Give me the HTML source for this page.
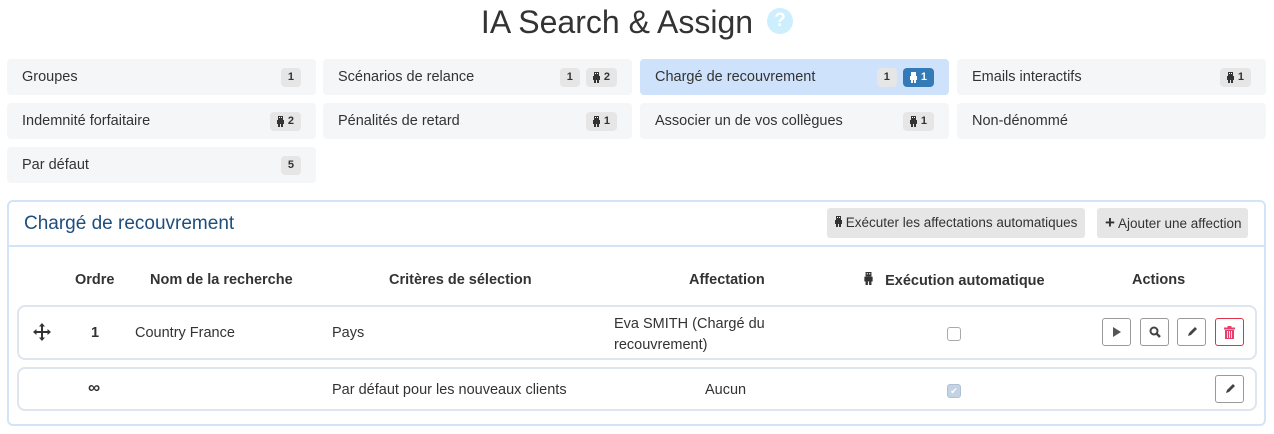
<!DOCTYPE html>
<html><head><meta charset="utf-8"><style>
body{margin:0;width:1274px;height:434px;background:#fff;font-family:"Liberation Sans",sans-serif;color:#333;position:relative;overflow:hidden}
.a{position:absolute}
h1{position:absolute;left:0;width:1234px;top:4px;margin:0;text-align:center;font-weight:normal;font-size:32px;color:#333}
.help{left:767px;top:8px;width:26px;height:26px;border-radius:50%;background:#cdeefc;color:#fff;font-weight:bold;font-size:19px;text-align:center;line-height:26px}
.card{position:absolute;height:36px;width:309px;background:#f5f6f8;border-radius:4px;font-size:14.5px;line-height:36px;box-sizing:border-box;padding-left:15px}
.card.act{background:#cfe2fb}
.bd{position:absolute;top:0;right:15px;display:flex;gap:6px;height:36px;align-items:center}
.b{background:#e6e6e6;border-radius:4px;font-size:11px;font-weight:bold;height:19px;line-height:19px;padding:0 7px;color:#333;display:flex;align-items:center;gap:4px}
.b.blue{background:#337ab7;color:#fff}
.panel{left:7px;top:200px;width:1259px;height:226px;border:2px solid #d3e3f8;border-radius:6px;box-sizing:border-box}
.btn{position:absolute;top:208px;height:30px;background:#e6e6e6;border-radius:3px;font-size:13.5px;line-height:30px;padding:0 8px;box-sizing:border-box;white-space:nowrap}
.th{position:absolute;top:272px;font-weight:bold;font-size:14.5px;white-space:nowrap}
.row{position:absolute;left:17px;width:1240px;border:2px solid #dfe5ee;border-radius:8px;box-sizing:border-box}
.t{position:absolute;font-size:14.5px;white-space:nowrap}
.ib{position:absolute;width:29px;height:28px;border:1px solid #999;border-radius:3px;box-sizing:border-box;display:flex;align-items:center;justify-content:center;background:#fff}
.cb{position:absolute;width:14px;height:14px;border:1px solid #aaa;border-radius:3px;box-sizing:border-box}
</style></head><body>
<svg width="0" height="0" style="position:absolute"><defs><symbol id="r" viewBox="0 0 7 11"><rect x="1" y="0" width="5" height="4" fill="currentColor"/><rect x="2" y="1" width="1" height="1" fill="#fff"/><rect x="4" y="1" width="1" height="1" fill="#fff"/><rect x="0" y="4" width="7" height="4" fill="currentColor"/><rect x="1" y="8" width="2" height="3" fill="currentColor"/><rect x="4" y="8" width="2" height="3" fill="currentColor"/></symbol></defs></svg>
<h1>IA Search &amp; Assign</h1>
<div class="a help">?</div>

<div class="card" style="left:7px;top:59px">Groupes<div class="bd"><span class="b">1</span></div></div>
<div class="card" style="left:323px;top:59px">Scénarios de relance<div class="bd"><span class="b">1</span><span class="b"><svg width="7" height="11"><use href="#r"/></svg>2</span></div></div>
<div class="card act" style="left:640px;top:59px">Chargé de recouvrement<div class="bd"><span class="b">1</span><span class="b blue"><svg width="7" height="11" style="color:#fff"><use href="#r"/></svg>1</span></div></div>
<div class="card" style="left:957px;top:59px">Emails interactifs<div class="bd"><span class="b"><svg width="7" height="11"><use href="#r"/></svg>1</span></div></div>
<div class="card" style="left:7px;top:103px">Indemnité forfaitaire<div class="bd"><span class="b"><svg width="7" height="11"><use href="#r"/></svg>2</span></div></div>
<div class="card" style="left:323px;top:103px">Pénalités de retard<div class="bd"><span class="b"><svg width="7" height="11"><use href="#r"/></svg>1</span></div></div>
<div class="card" style="left:640px;top:103px">Associer un de vos collègues<div class="bd"><span class="b"><svg width="7" height="11"><use href="#r"/></svg>1</span></div></div>
<div class="card" style="left:957px;top:103px">Non-dénommé</div>
<div class="card" style="left:7px;top:147px">Par défaut<div class="bd"><span class="b">5</span></div></div>

<div class="a panel"></div>
<div class="a" style="left:9px;top:245px;width:1255px;height:2px;background:#d3e3f8"></div>
<div class="a" style="left:24px;top:213px;font-size:19px;color:#1d4f7c">Chargé de recouvrement</div>
<div class="btn" style="left:827px;width:258px"><svg width="7" height="11" style="color:#333"><use href="#r"/></svg> Exécuter les affectations automatiques</div>
<div class="btn" style="left:1097px;width:151px"><b style="font-size:17px">+</b> Ajouter une affection</div>

<div class="th" style="left:75px">Ordre</div>
<div class="th" style="left:150px">Nom de la recherche</div>
<div class="th" style="left:389px">Critères de sélection</div>
<div class="th" style="left:689px">Affectation</div>
<div class="th" style="left:864px"><svg width="9" height="13" style="color:#333"><use href="#r"/></svg>&nbsp;&nbsp;&nbsp;Exécution automatique</div>
<div class="th" style="left:1132px">Actions</div>

<div class="row" style="top:305px;height:55px"></div>
<div class="row" style="top:367px;height:44px"></div>
<svg class="a" style="left:33px;top:323px" width="18" height="18" viewBox="0 0 18 18"><path d="M9 0l3 3.5H10V8h4.5V6L18 9l-3.5 3v-2H10v4.5h2L9 18l-3-3.5h2V10H3.5v2L0 9l3.5-3v2H8V3.5H6z" fill="#333"/></svg>
<div class="t" style="left:91px;top:325px;font-weight:bold">1</div>
<div class="t" style="left:135px;top:325px">Country France</div>
<div class="t" style="left:332px;top:325px">Pays</div>
<div class="t" style="left:614px;top:314px;line-height:21px">Eva SMITH (Chargé du<br>recouvrement)</div>
<div class="cb" style="left:947px;top:327px"></div>
<div class="ib" style="left:1102px;top:318px"><svg width="10" height="12"><path d="M1 1l8 5-8 5z" fill="#555"/></svg></div>
<div class="ib" style="left:1140px;top:318px"><svg width="12" height="12"><circle cx="5" cy="5" r="3.5" stroke="#444" stroke-width="2" fill="none"/><path d="M7.5 7.5l3.5 3.5" stroke="#444" stroke-width="2.4"/></svg></div>
<div class="ib" style="left:1177px;top:318px"><svg width="12" height="12"><path d="M2 10l1-3 6-6 2 2-6 6z" fill="#444"/></svg></div>
<div class="ib" style="left:1215px;top:318px;border-color:#e0304a"><svg width="11" height="13"><rect x="0" y="1.5" width="11" height="2" fill="#e83e6b"/><rect x="3.5" y="0" width="4" height="2" fill="#e83e6b"/><path d="M1 4h9v9H1z" fill="#e83e6b"/><path d="M3.5 5v7M5.5 5v7M7.5 5v7" stroke="#fff" stroke-width=".8"/></svg></div>

<div class="t" style="left:88px;top:378px;font-size:17px;font-weight:bold">∞</div>
<div class="t" style="left:332px;top:382px">Par défaut pour les nouveaux clients</div>
<div class="t" style="left:705px;top:382px">Aucun</div>
<div class="cb" style="left:947px;top:384px;background:#c3d3e4;border-color:#b0c0d4;color:#fff;font-size:9px;text-align:center;line-height:12px">✔</div>
<div class="ib" style="left:1215px;top:375px"><svg width="12" height="12"><path d="M2 10l1-3 6-6 2 2-6 6z" fill="#444"/></svg></div>
</body></html>
